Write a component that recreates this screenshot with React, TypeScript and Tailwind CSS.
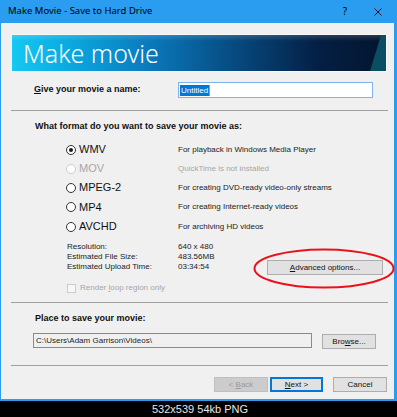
const ui = "font-['Liberation_Sans',Arial,sans-serif]";
const seg = "font-['Noto_Sans','Open_Sans',sans-serif]";

interface Format {
  name: string;
  desc: string;
  checked?: boolean;
  disabled?: boolean;
  h: string;
}

const formats: Format[] = [
  { name: 'WMV', desc: 'For playback in Windows Media Player', checked: true, h: 'h-[19px]' },
  { name: 'MOV', desc: 'QuickTime is not installed', disabled: true, h: 'h-[19px]' },
  { name: 'MPEG-2', desc: 'For creating DVD-ready video-only streams', h: 'h-[19px]' },
  { name: 'MP4', desc: 'For creating Internet-ready videos', h: 'h-[20px]' },
  { name: 'AVCHD', desc: 'For archiving HD videos', h: 'h-[19px]' },
];

function Separator() {
  return <div className="h-px bg-[#a0a0a0] mr-[-1px]" />;
}

function Radio({ checked, disabled }: { checked?: boolean; disabled?: boolean }) {
  return (
    <span
      className={`flex h-[10px] w-[10px] items-center justify-center rounded-full border bg-white ${
        disabled ? 'border-[#cccccc]' : 'border-[#333333]'
      }`}
    >
      {checked && <span className="h-[4px] w-[4px] rounded-full bg-[#1a1a1a]" />}
    </span>
  );
}

function Button({
  children,
  className = '',
  disabled,
  primary,
}: {
  children: React.ReactNode;
  className?: string;
  disabled?: boolean;
  primary?: boolean;
}) {
  return (
    <div
      className={`flex h-[15px] items-center justify-center border text-[8px] ${ui} ${
        disabled
          ? 'border-[#bfbfbf] bg-[#cccccc] text-[#9a9a9a]'
          : primary
          ? 'border-[#0078d7] bg-[#e1e1e1] text-[#111] shadow-[inset_0_0_0_1px_#0078d7]'
          : 'border-[#adadad] bg-[#e1e1e1] text-[#111]'
      } ${className}`}
    >
      {children}
    </div>
  );
}

export default function App() {
  return (
    <div className="flex h-[417px] w-[397px] flex-col overflow-hidden bg-black">
      <div className="flex h-[401px] flex-col border-b-2 border-l border-r-[3px] border-[#2a9df0]">
        {/* title bar */}
        <div className={`flex h-[23px] shrink-0 items-center bg-[#2a9df0] pl-[7px] text-[9.5px] text-black ${seg}`}>
          <span>Make Movie - Save to Hard Drive</span>
          <span className="ml-auto w-[10px] text-center text-[10px]">?</span>
          <svg width="8" height="8" viewBox="0 0 8 8" className="ml-[24px] mr-[12px]">
            <path d="M0.5 0.5 L7.5 7.5 M7.5 0.5 L0.5 7.5" stroke="#111" strokeWidth="1" />
          </svg>
        </div>

        <div className="flex flex-1 flex-col bg-[#f0f0f0] pl-[10px] pr-[7px]">
          {/* banner */}
          <div className="relative mt-[11px] h-[38px] shrink-0 overflow-hidden border border-[#f8f8f8] bg-[linear-gradient(to_right,#16c8f2_0%,#0bb0e4_12%,#0a7dc0_35%,#07497f_60%,#041f44_82%,#03152e_100%)]">
            <div className="absolute inset-x-0 top-0 h-[6px] bg-gradient-to-b from-white/15 to-transparent" />
            <svg className="absolute right-0 top-0 h-full w-[16px]" viewBox="0 0 16 36" preserveAspectRatio="none">
              <polygon points="11,0 16,0 16,36 0,36" fill="#0b4d63" />
            </svg>
            <span className={`absolute left-[11px] top-[3px] text-[25px] font-light leading-[30px] text-white ${seg}`}>
              Make movie
            </span>
          </div>

          {/* name row */}
          <div className="mt-[10px] flex h-[16px] shrink-0 items-center">
            <span className={`ml-[23px] text-[9px] font-bold text-[#111] ${ui}`}>
              <span className="underline">G</span>ive your movie a name:
            </span>
            <div className="ml-auto mr-[14px] flex h-[16px] w-[195px] items-center border border-[#7eb4ea] bg-white pl-[1px]">
              <span className={`bg-[#0078d7] px-[1px] text-[8px] leading-[11px] text-white ${ui}`}>Untitled</span>
              <span className="h-[11px] w-px bg-[#f08a24]" />
            </div>
          </div>

          <div className="mt-[12px]">
            <Separator />
          </div>

          <div className={`mt-[7px] flex h-[18px] shrink-0 items-center pl-[24px] text-[9px] font-bold text-[#111] ${ui}`}>
            What format do you want to save your movie as:
          </div>

          {/* formats */}
          <div className="mt-[4px] flex flex-col">
            {formats.map((f) => (
              <div key={f.name} className={`flex ${f.h} items-center`}>
                <span className="ml-[55px]">
                  <Radio checked={f.checked} disabled={f.disabled} />
                </span>
                <span
                  className={`ml-[3px] w-[99px] text-[11px] ${ui} ${f.disabled ? 'text-[#a6a6a6]' : 'text-[#111]'}`}
                >
                  {f.name}
                </span>
                <span className={`text-[8px] ${ui} ${f.disabled ? 'text-[#a6a6a6]' : 'text-[#222]'}`}>{f.desc}</span>
              </div>
            ))}
          </div>

          {/* stats + advanced */}
          <div className="relative mt-[6px] flex">
            <div className={`ml-[56px] flex flex-col text-[8px] text-[#222] ${ui}`}>
              {[
                ['Resolution:', '640 x 480'],
                ['Estimated File Size:', '483.56MB'],
                ['Estimated Upload Time:', '03:34:54'],
              ].map(([k, v]) => (
                <div key={k} className="flex h-[10px] items-center">
                  <span className="w-[111px]">{k}</span>
                  <span>{v}</span>
                </div>
              ))}
            </div>
            <Button className="ml-auto mr-[4px] mt-[18px] w-[116px]">
              <span>
                <span className="underline">A</span>dvanced options...
              </span>
            </Button>
            <svg className="absolute left-[242px] top-[6px]" width="142" height="41" viewBox="0 0 142 41">
              <ellipse cx="71" cy="20.5" rx="69.5" ry="19" fill="none" stroke="#e8121b" strokeWidth="2" />
            </svg>
          </div>

          {/* checkbox */}
          <div className="mt-[8px] flex h-[10px] items-center">
            <span className="ml-[56px] h-[9px] w-[9px] border border-[#cccccc] bg-[#f7f7f7]" />
            <span className={`ml-[4px] text-[8px] text-[#a6a6a6] ${ui}`}>
              Render <span className="underline">l</span>oop region only
            </span>
          </div>

          <div className="mt-[9px]">
            <Separator />
          </div>

          <div className={`mt-[7px] flex h-[18px] shrink-0 items-center pl-[24px] text-[9px] font-bold text-[#111] ${ui}`}>
            Place to save your movie:
          </div>

          <div className="mt-[5px] flex h-[15px] items-center">
            <div className={`ml-[22px] flex h-[15px] w-[279px] items-center border border-[#8a8a8a] bg-[#f0f0f0] pl-[2px] text-[8px] text-[#222] ${ui}`}>
              C:\Users\Adam Garrison\Videos\
            </div>
            <Button className="ml-[10px] mt-[2px] w-[54px]">
              <span>
                Bro<span className="underline">w</span>se...
              </span>
            </Button>
          </div>

          <div className="mt-[17px]">
            <Separator />
          </div>

          <div className="mt-[11px] flex items-center">
            <Button disabled className="ml-[203px] w-[54px]">
              <span>
                &lt; <span className="underline">B</span>ack
              </span>
            </Button>
            <Button primary className="ml-[2px] w-[53px]">
              <span>
                <span className="underline">N</span>ext &gt;
              </span>
            </Button>
            <Button className="ml-[10px] w-[54px]">Cancel</Button>
          </div>
        </div>
      </div>
      <div className={`flex h-[16px] items-center pl-[152px] text-[11px] text-[#e8e8e8] ${ui}`}>532x539 54kb PNG</div>
    </div>
  );
}
